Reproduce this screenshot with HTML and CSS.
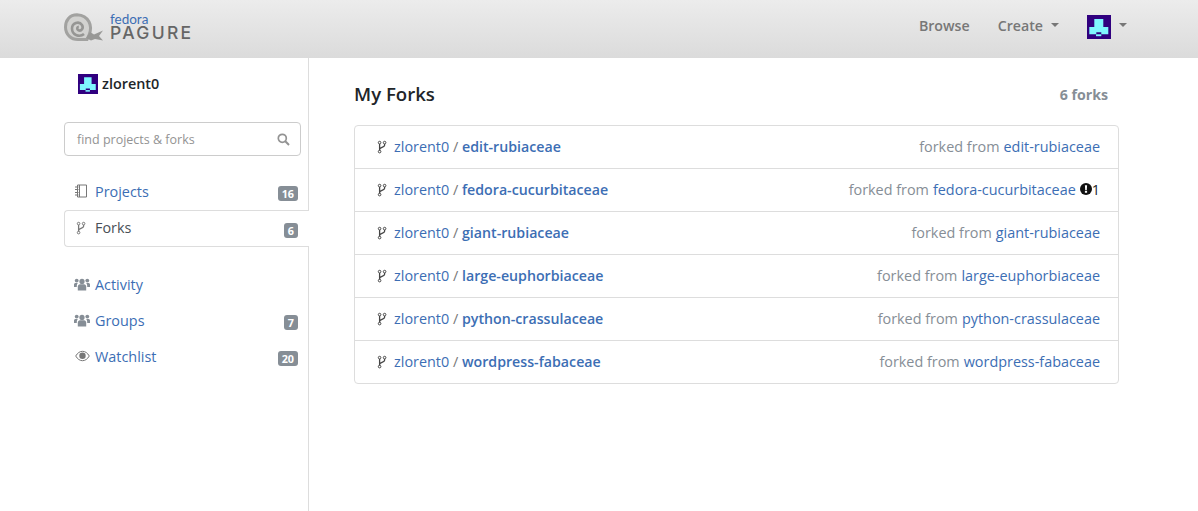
FILE: index.html
```html
<!DOCTYPE html>
<html lang="en">
  <head>
    <meta charset="UTF-8" />
    <title>My Forks</title>
    <link rel="stylesheet" href="styles.css">
  </head>
  <body>
    <svg class="defs" width="0" height="0">
      <symbol id="fork" viewBox="0 0 10 14">
        <path d="M2.6 4v6.500M7.600 4v1.200c0 2.200-5 2.300-5 4.300" fill="none" stroke="currentColor" stroke-width="1.300"/>
        <circle cx="2.600" cy="2.600" r="1.300" fill="none" stroke="currentColor" stroke-width="1"/>
        <circle cx="7.600" cy="2.600" r="1.300" fill="none" stroke="currentColor" stroke-width="1"/>
        <circle cx="2.600" cy="11.600" r="1.300" fill="none" stroke="currentColor" stroke-width="1"/>
      </symbol>
      <symbol id="users" viewBox="0 0 16 13">
        <circle cx="8" cy="3.400" r="2.600"/>
        <circle cx="2.700" cy="2.600" r="1.900"/>
        <circle cx="13.300" cy="2.600" r="1.900"/>
        <path d="M3.800 12.600V8.600c0-1.500 1-2.400 2.200-2.400h4c1.200 0 2.200.9 2.200 2.400v4z"/>
        <path d="M0 9V6.600c0-.9.7-1.600 1.600-1.600h2.200c-.6.7-1 1.600-1 2.800V9zM16 9V6.600c0-.9-.7-1.600-1.600-1.600h-2.200c.6.7 1 1.600 1 2.800V9z"/>
      </symbol>
      <symbol id="avatar" viewBox="0 0 24 24">
        <rect width="24" height="24" fill="#30007f"/>
        <path d="M7.300 4h9v8h5v7.300h-7v-2h-5v2h-7V12h5z" fill="#80f6ff"/>
        <rect x="9" y="19.300" width="5.300" height="1.900" fill="#80f6ff"/>
      </symbol>
    </svg>

    <header class="topbar">
      <a class="logo" href="#">
        <svg class="logo-shell" width="40" height="28" viewBox="0 0 40 28">
          <path d="M25 22C29 13 25 2.500 13 1.800 5.500 1.800 1.500 7.500 1.500 14c0 7.500 5.500 12.500 12.500 12.500h9z" fill="#d2d2d0" stroke="#a2a2a0" stroke-width="3"/>
          <path d="M20 21c-4 3.500-12 1.500-12-5.500 0-5.500 7-8 10-3.500 2 3.200-.8 6.500-3.500 5.300-2-.9-1.500-3.500.3-3.500" fill="none" stroke="#969694" stroke-width="2.600"/>
          <path d="M22 25l4-6 4 2.500 9-4-4 5.500 4 4.500-8-1.500-4 1.500z" fill="#989896"/>
        </svg>
        <span class="logo-text">
          <span class="logo-fedora">fedora</span>
          <span class="logo-pagure">PAGURE</span>
        </span>
      </a>
      <nav class="topnav">
        <a href="#"><span class="nav-label">Browse</span></a>
        <a href="#" class="caret"><span class="nav-label">Create</span></a>
        <a href="#" class="caret"><svg width="24" height="24"><use href="#avatar"/></svg></a>
      </nav>
    </header>

    <div class="page">
      <aside class="sidebar">
        <div class="user">
          <svg width="20" height="20"><use href="#avatar"/></svg>
          <strong>zlorent0</strong>
        </div>
        <div class="search">
          <span>find projects &amp; forks</span>
          <svg width="13" height="13" viewBox="0 0 13 13"><circle cx="5.300" cy="5.300" r="4" fill="none" stroke="currentColor" stroke-width="1.700"/><path d="M8.300 8.300l3.700 3.700" stroke="currentColor" stroke-width="2"/></svg>
        </div>
        <ul class="side-nav">
          <li>
            <svg class="side-icon" width="14" height="14" viewBox="0 0 14 14"><path d="M3.500 1h9v12h-9zM5.500 1v12M1 3h3.500M1 5.500h3.500M1 8.500h3.500M1 11h3.500" fill="none" stroke="currentColor" stroke-width="1"/></svg>
            <a href="#">Projects</a>
            <span class="badge">16</span>
          </li>
          <li class="active">
            <svg class="side-icon" width="14" height="14"><use href="#fork"/></svg>
            <a href="#">Forks</a>
            <span class="badge">6</span>
          </li>
          <li class="spaced">
            <svg class="side-icon users" width="16" height="13"><use href="#users"/></svg>
            <a href="#">Activity</a>
          </li>
          <li>
            <svg class="side-icon users" width="16" height="13"><use href="#users"/></svg>
            <a href="#">Groups</a>
            <span class="badge">7</span>
          </li>
          <li>
            <svg class="side-icon eye" width="15" height="12" viewBox="0 0 15 12"><path d="M.7 6C2.500 3 4.700 1.300 7.500 1.300S12.500 3 14.300 6c-1.800 3-4 4.700-6.800 4.700S2.500 9 .7 6z" fill="none" stroke="currentColor" stroke-width="1"/><circle cx="7.500" cy="5.800" r="3.200" fill="currentColor"/></svg>
            <a href="#">Watchlist</a>
            <span class="badge">20</span>
          </li>
        </ul>
      </aside>

      <main class="content">
        <div class="content-head">
          <h1>My Forks</h1>
          <span class="count">6 forks</span>
        </div>
        <div class="fork-list">
          <div class="fork-row">
            <svg class="fork-icon" width="14" height="14"><use href="#fork"/></svg>
            <span><a href="#">zlorent0</a> <span class="sep">/</span> <a href="#" class="repo">edit-rubiaceae</a></span>
            <span class="origin">forked from <a href="#">edit-rubiaceae</a></span>
          </div>
          <div class="fork-row">
            <svg class="fork-icon" width="14" height="14"><use href="#fork"/></svg>
            <span><a href="#">zlorent0</a> <span class="sep">/</span> <a href="#" class="repo">fedora-cucurbitaceae</a></span>
            <span class="origin">forked from <a href="#">fedora-cucurbitaceae</a>
              <span class="issues"><svg width="12" height="12" viewBox="0 0 12 12"><circle cx="6" cy="6" r="6" fill="#111"/><path d="M4.900 2.300h2.200l-.3 4.600H5.200zM4.900 7.800h2.200v2H4.900z" fill="#fff"/></svg>1</span>
            </span>
          </div>
          <div class="fork-row">
            <svg class="fork-icon" width="14" height="14"><use href="#fork"/></svg>
            <span><a href="#">zlorent0</a> <span class="sep">/</span> <a href="#" class="repo">giant-rubiaceae</a></span>
            <span class="origin">forked from <a href="#">giant-rubiaceae</a></span>
          </div>
          <div class="fork-row">
            <svg class="fork-icon" width="14" height="14"><use href="#fork"/></svg>
            <span><a href="#">zlorent0</a> <span class="sep">/</span> <a href="#" class="repo">large-euphorbiaceae</a></span>
            <span class="origin">forked from <a href="#">large-euphorbiaceae</a></span>
          </div>
          <div class="fork-row">
            <svg class="fork-icon" width="14" height="14"><use href="#fork"/></svg>
            <span><a href="#">zlorent0</a> <span class="sep">/</span> <a href="#" class="repo">python-crassulaceae</a></span>
            <span class="origin">forked from <a href="#">python-crassulaceae</a></span>
          </div>
          <div class="fork-row">
            <svg class="fork-icon" width="14" height="14"><use href="#fork"/></svg>
            <span><a href="#">zlorent0</a> <span class="sep">/</span> <a href="#" class="repo">wordpress-fabaceae</a></span>
            <span class="origin">forked from <a href="#">wordpress-fabaceae</a></span>
          </div>
        </div>
      </main>
    </div>
  </body>
</html>
```

FILE: styles.css
```css
* {
  margin: 0;
  padding: 0;
  box-sizing: border-box;
}

html,
body {
  height: 100%;
}

body {
  font-family: "Open Sans", "Liberation Sans", sans-serif;
  font-size: 14.4px;
  line-height: 21px;
  color: #212529;
  background: #fff;
  overflow: hidden;
}

a {
  color: #3c6eb4;
  text-decoration: none;
}

ul {
  list-style: none;
}

svg {
  flex: none;
  display: block;
}

.defs {
  position: absolute;
}

.topbar {
  height: 58px;
  padding: 0 71px 4px 64px;
  display: flex;
  align-items: center;
  justify-content: space-between;
  background: linear-gradient(#ececec, #dbdbdb);
}

.logo {
  display: flex;
  align-items: center;
  gap: 6px;
}

.logo-text {
  display: flex;
  flex-direction: column;
}

.logo-fedora {
  font-family: "Lato", sans-serif;
  font-size: 13.5px;
  line-height: 12px;
  color: #3c6eb4;
}

.logo-pagure {
  font-family: "Inter", sans-serif;
  font-size: 17.5px;
  line-height: 16px;
  letter-spacing: 2.3px;
  font-weight: 500;
  color: #666;
}

.topnav {
  display: flex;
  align-items: center;
  gap: 28px;
  font-size: 14.2px;
  font-weight: 600;
}

.topnav a {
  color: #777;
  display: flex;
  align-items: center;
}

.nav-label {
  margin-bottom: 3px;
}

.caret::after {
  content: "";
  margin-left: 8px;
  border-top: 4px solid #777;
  border-left: 4px solid transparent;
  border-right: 4px solid transparent;
  margin-top: -4px;
}

.page {
  display: flex;
  height: calc(100% - 58px);
}

.sidebar {
  width: 245px;
  margin-left: 64px;
  border-right: 1px solid #ddd;
}

.user {
  display: flex;
  align-items: center;
  gap: 4px;
  height: 20px;
  margin: 16px 0 28px 14px;
}

.user strong {
  font-weight: 600;
  margin-top: -2px;
}

.search {
  width: 237px;
  height: 34px;
  padding: 0 10px 0 12px;
  display: flex;
  align-items: center;
  justify-content: space-between;
  border: 1px solid #ccc;
  border-radius: 4px;
  font-size: 12.5px;
  color: #939393;
}

.side-nav {
  margin-top: 17px;
}

.side-nav li {
  height: 36px;
  padding: 0 10px;
  margin-right: -1px;
  display: flex;
  align-items: center;
  gap: 7px;
}

.side-icon {
  color: #777;
}

.side-icon.users {
  margin-right: -2px;
  fill: #868e96;
}

.side-icon.eye {
  margin-left: 1px;
  margin-right: -2px;
}

.side-nav .badge {
  margin-left: auto;
  margin-right: 1px;
  margin-top: 5px;
  background: #868e96;
  color: #fff;
  font-size: 10.8px;
  font-weight: 700;
  line-height: 15px;
  padding: 0 4px;
  border-radius: 3px;
}

.side-nav li.active {
  height: 37px;
  margin-top: 1px;
  padding: 0 10px 2px 9px;
  background: #fff;
  border: 1px solid #ddd;
  border-right: 0;
  border-top-left-radius: 4px;
  border-bottom-left-radius: 4px;
}

.side-nav li.active a {
  color: #495057;
}

.side-nav li.spaced {
  margin-top: 19px;
}

.content {
  width: 765px;
  margin-left: 45px;
}

.content-head {
  display: flex;
  align-items: center;
  justify-content: space-between;
  height: 24px;
  margin: 24px 0 19px;
  padding-right: 11px;
}

h1 {
  font-size: 18.6px;
  font-weight: 600;
  line-height: 24px;
}

.count {
  font-size: 14.2px;
  font-weight: 700;
  color: #868e96;
}

.fork-list {
  border: 1px solid #ddd;
  border-radius: 4px;
}

.fork-row {
  height: 43px;
  padding: 0 18px 2px 20px;
  display: flex;
  align-items: center;
  border-bottom: 1px solid #ddd;
  white-space: nowrap;
}

.fork-row:last-child {
  height: 42px;
  border-bottom: 0;
}

.fork-icon {
  color: #444;
  margin: 2px 5px 0 0;
}

.sep {
  color: #777;
}

.repo {
  font-size: 14.2px;
  font-weight: 600;
}

.origin {
  margin-left: auto;
  color: #868e96;
  display: flex;
  align-items: center;
  gap: 4px;
}

.issues {
  display: flex;
  align-items: center;
  color: #212529;
}
```
